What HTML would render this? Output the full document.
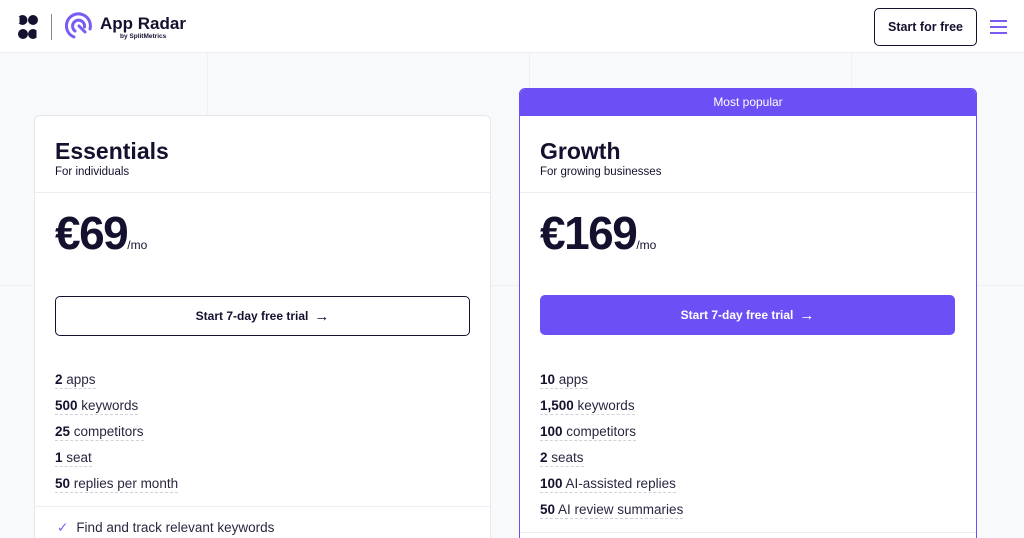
<!DOCTYPE html>
<html><head><meta charset="utf-8"><style>
*{box-sizing:border-box;margin:0;padding:0}
html,body{width:1024px;height:538px;overflow:hidden}
body{background:#f8f9fb;font-family:"Liberation Sans",sans-serif;color:#14112e;position:relative}
.hdr{position:absolute;top:0;left:0;width:1024px;height:53px;background:#fff;border-bottom:1px solid #eceef2}
.vl{position:absolute;top:53px;width:1px;height:485px;background:#eef0f3}
.hl{position:absolute;top:285px;left:0;width:1024px;height:1px;background:#eef0f3}
.card{position:absolute;background:#fff;border:1px solid #e6e8ee;border-radius:6px 6px 0 0}
.t{position:absolute;left:20px;font-weight:bold;font-size:23px}
.s{position:absolute;left:20px;font-size:11.5px}
.div{position:absolute;left:0;right:0;height:1px;background:#eceef2}
.price{position:absolute;left:20px;top:90px;font-weight:bold;font-size:46px;letter-spacing:-1.5px}
.price span{font-size:12px;font-weight:normal;letter-spacing:0}
.btn{position:absolute;left:20px;width:415px;height:40px;border-radius:5px;font-weight:bold;font-size:12px;display:flex;align-items:center;justify-content:center;gap:6px}
.li{position:absolute;left:20px;font-size:13.5px;color:#2a2740;border-bottom:1px dashed #cfd2da;line-height:16px}
.li b{color:#14112e}
</style></head><body>
<div class="vl" style="left:207px"></div><div class="vl" style="left:529px"></div><div class="vl" style="left:851px"></div>
<div class="hl"></div>
<div class="hdr">
<svg style="position:absolute;left:17px;top:13px" width="22" height="28" viewBox="0 0 22 28"><circle cx="5.5" cy="7" r="5" fill="#14112e"/><circle cx="16" cy="7" r="5" fill="#14112e"/><circle cx="6" cy="21" r="5" fill="#14112e"/><circle cx="16" cy="21" r="5" fill="#14112e"/><rect x="0" y="4" width="2.5" height="6" fill="#fff"/><rect x="19.5" y="18" width="2.5" height="6" fill="#fff"/></svg>
<div style="position:absolute;left:51px;top:14px;width:1px;height:26px;background:#888"></div>
<svg style="position:absolute;left:65px;top:12px" width="28" height="28" viewBox="0 0 28 28" fill="none" stroke="#7a5cf5" stroke-width="3" stroke-linecap="round"><path d="M9 25A12 12 0 1 1 25 17"/><path d="M10 19A6 6 0 1 1 19.5 15"/><path d="M14 14L20 20"/></svg>
<div style="position:absolute;left:100px;top:14px;font-weight:bold;font-size:17px">App Radar</div>
<div style="position:absolute;left:120px;top:33px;font-weight:bold;font-size:6.5px">by SplitMetrics</div>
<div style="position:absolute;left:874px;top:8px;width:103px;height:38px;border:1.5px solid #14112e;border-radius:5px;font-weight:bold;font-size:12.5px;display:flex;align-items:center;justify-content:center">Start for free</div>
<div style="position:absolute;left:990px;top:20px;width:17px"><div style="height:2px;background:#7a5cf5;margin-bottom:4px"></div><div style="height:2px;background:#7a5cf5;margin-bottom:4px"></div><div style="height:2px;background:#7a5cf5"></div></div>
</div>

<div class="card" style="left:34px;top:115px;width:457px;height:430px">
<div class="t" style="top:22px">Essentials</div><div class="s" style="top:50px">For individuals</div>
<div class="div" style="top:76px"></div>
<div class="price">€69<span>/mo</span></div>
<div class="btn" style="top:180px;border:1.5px solid #14112e;color:#14112e">Start 7-day free trial <span style="font-size:15px">→</span></div>
<div class="li" style="top:256px"><b>2</b> apps</div>
<div class="li" style="top:282px"><b>500</b> keywords</div>
<div class="li" style="top:308px"><b>25</b> competitors</div>
<div class="li" style="top:334px"><b>1</b> seat</div>
<div class="li" style="top:360px"><b>50</b> replies per month</div>
<div class="div" style="top:390px"></div>
<div style="position:absolute;left:22px;top:404px;font-size:13.5px;color:#2a2740"><span style="color:#7a5cf5;margin-right:8px">✓</span>Find and track relevant keywords</div>
</div>

<div class="card" style="left:519px;top:88px;width:458px;height:460px;border:1.5px solid #6c4ff5;overflow:hidden">
<div style="height:27px;background:#6c4ff5;color:#fff;font-size:12px;text-align:center;line-height:27px">Most popular</div>
<div class="t" style="top:49px">Growth</div><div class="s" style="top:77px">For growing businesses</div>
<div class="div" style="top:103px"></div>
<div class="price" style="top:117px">€169<span>/mo</span></div>
<div class="btn" style="top:206px;background:#6c4ff5;color:#fff">Start 7-day free trial <span style="font-size:15px">→</span></div>
<div class="li" style="top:283px"><b>10</b> apps</div>
<div class="li" style="top:309px"><b>1,500</b> keywords</div>
<div class="li" style="top:335px"><b>100</b> competitors</div>
<div class="li" style="top:361px"><b>2</b> seats</div>
<div class="li" style="top:387px"><b>100</b> AI-assisted replies</div>
<div class="li" style="top:413px"><b>50</b> AI review summaries</div>
<div class="div" style="top:443px"></div>
</div>
</body></html>
